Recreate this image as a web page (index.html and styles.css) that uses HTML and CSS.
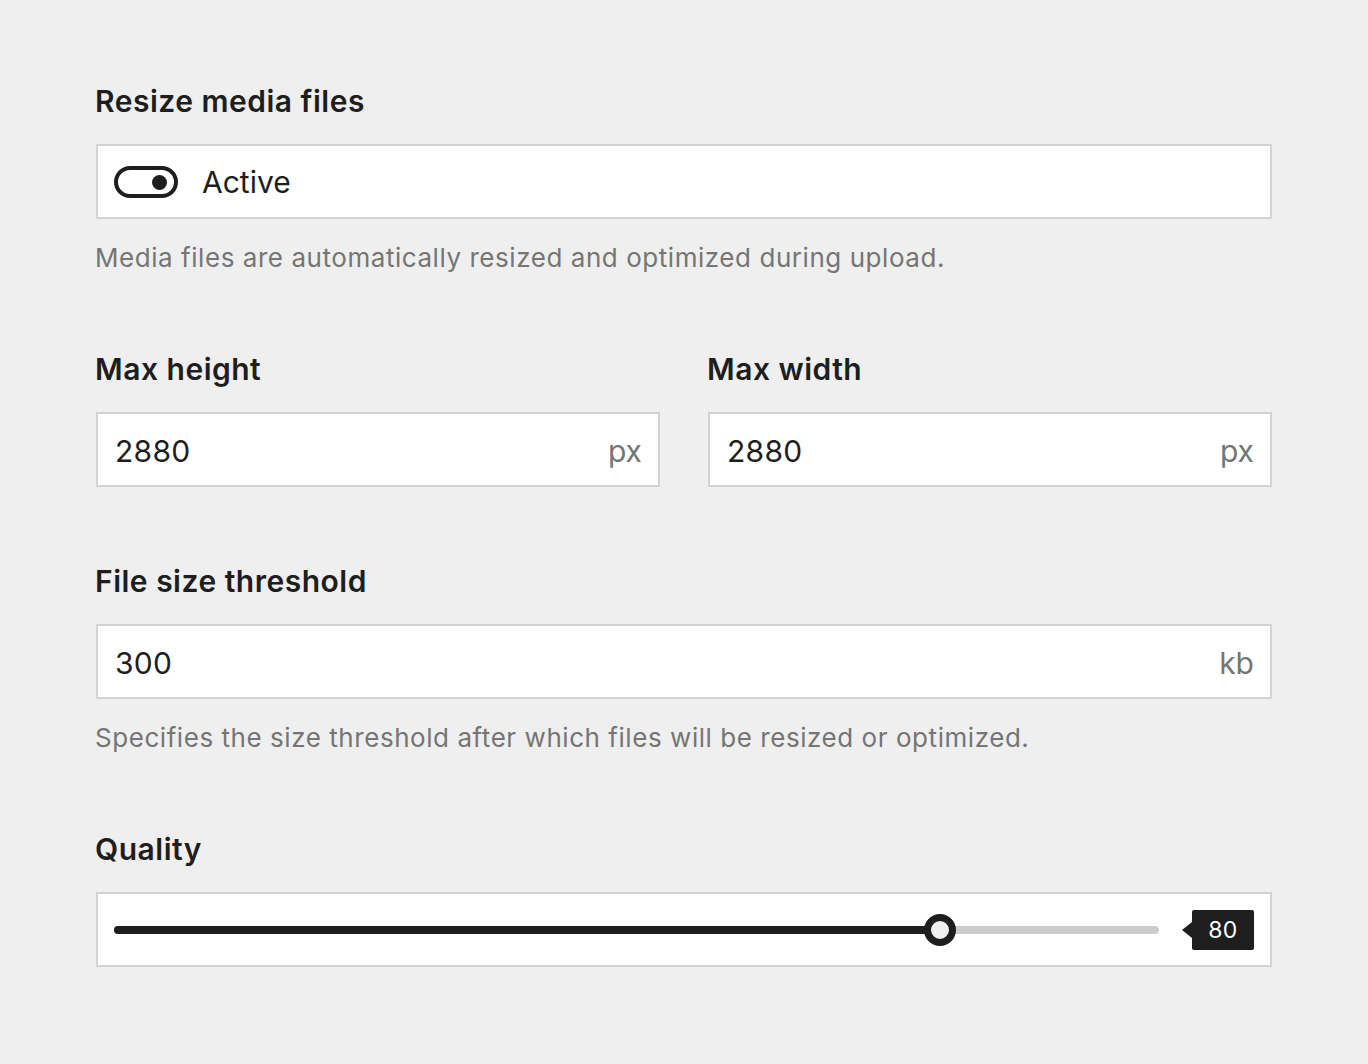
FILE: index.html
```html
<!DOCTYPE html>
<html lang="en">
<head>
<meta charset="utf-8">
<title>Media settings</title>
<link rel="stylesheet" href="styles.css">
</head>
<body>
<main class="settings">
  <section class="field">
    <h2 class="label">Resize media files</h2>
    <div class="box toggle-box">
      <span class="toggle"><span class="toggle-dot"></span></span>
      <span class="toggle-text">Active</span>
    </div>
    <p class="help">Media files are automatically resized and optimized during upload.</p>
  </section>

  <section class="field row">
    <div class="col">
      <h2 class="label">Max height</h2>
      <div class="box input-box">
        <span class="value">2880</span>
        <span class="unit">px</span>
      </div>
    </div>
    <div class="col">
      <h2 class="label">Max width</h2>
      <div class="box input-box">
        <span class="value">2880</span>
        <span class="unit">px</span>
      </div>
    </div>
  </section>

  <section class="field">
    <h2 class="label">File size threshold</h2>
    <div class="box input-box">
      <span class="value">300</span>
      <span class="unit">kb</span>
    </div>
    <p class="help">Specifies the size threshold after which files will be resized or optimized.</p>
  </section>

  <section class="field">
    <h2 class="label">Quality</h2>
    <div class="box slider-box">
      <div class="track">
        <div class="track-fill" style="width: 79%"></div>
        <div class="thumb" style="left: 79%"></div>
      </div>
      <div class="bubble">80</div>
    </div>
  </section>
</main>
</body>
</html>
```

FILE: styles.css
```css
* { box-sizing: border-box; }

html, body {
  margin: 0;
  background: #efefef;
}

body {
  font-family: Inter, "Noto Sans", sans-serif;
  color: #1e1e1e;
}

.settings {
  width: 1176px;
  margin-left: 96px;
  padding-top: 82px;
  display: flex;
  flex-direction: column;
  gap: 76px;
}

.field { display: flex; flex-direction: column; }

.row {
  flex-direction: row;
  gap: 48px;
  margin-bottom: -1px;
}

.col { flex: 1; display: flex; flex-direction: column; }

.label {
  margin: 0 0 25px -1px;
  padding-top: 1px;
  font-size: 30px;
  line-height: 36px;
  font-weight: 600;
  letter-spacing: 0.5px;
}

.box {
  height: 75px;
  background: #fff;
  border: 2px solid #d3d3d3;
  display: flex;
  align-items: center;
}

.toggle-box { padding-left: 16px; padding-top: 1px; }

.toggle {
  width: 64px;
  height: 32px;
  border: 4px solid #1e1e1e;
  border-radius: 16px;
  position: relative;
  flex: none;
}

.toggle-dot {
  position: absolute;
  width: 15px;
  height: 15px;
  border-radius: 50%;
  background: #1e1e1e;
  right: 7px;
  top: 4.5px;
}

.toggle-text {
  margin-left: 24px;
  font-size: 30px;
}

.help {
  margin: 21px 0 -2px -1px;
  font-size: 26px;
  line-height: 36px;
  letter-spacing: 0.55px;
  color: #757575;
}

.input-box {
  padding: 2px 16px 0 17px;
  justify-content: space-between;
}

.value { font-size: 30px; letter-spacing: 0.3px; }

.unit {
  font-size: 30px;
  color: #757575;
}

.slider-box { padding: 0 16px 0 16px; }

.track {
  flex: 1;
  height: 8px;
  border-radius: 4px;
  background: #cccccc;
  position: relative;
}

.track-fill {
  position: absolute;
  left: 0;
  top: 0;
  height: 8px;
  border-radius: 4px;
  background: #1e1e1e;
}

.thumb {
  position: absolute;
  top: 50%;
  width: 32px;
  height: 32px;
  margin: -16px 0 0 -16px;
  border-radius: 50%;
  border: 7px solid #1e1e1e;
  background: #f0f0f0;
}

.bubble {
  position: relative;
  margin-left: 33px;
  width: 62px;
  height: 40px;
  background: #1e1e1e;
  border-radius: 2px;
  color: #fff;
  font-size: 23px;
  letter-spacing: 0.5px;
  display: flex;
  align-items: center;
  justify-content: center;
}

.bubble::before {
  content: "";
  position: absolute;
  left: -10px;
  top: 12px;
  border-style: solid;
  border-width: 8px 10px 8px 0;
  border-color: transparent #1e1e1e transparent transparent;
}
```
